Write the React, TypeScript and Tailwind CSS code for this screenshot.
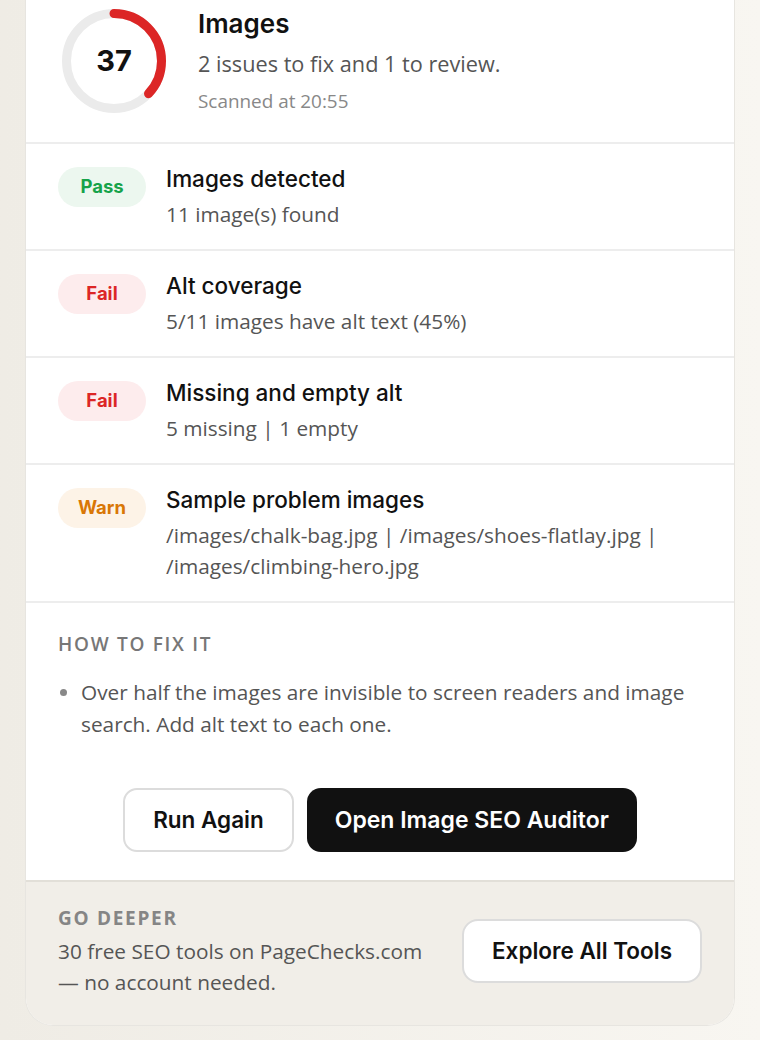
import React from "react";

type Status = "Pass" | "Fail" | "Warn";

const badgeCls: Record<Status, string> = {
  Pass: "bg-[#ecf7ef] text-[#16a34a]",
  Fail: "bg-[#fdeced] text-[#dc2626]",
  Warn: "bg-[#fdf3e7] text-[#d97706]",
};

const rows: { status: Status; title: string; desc: string }[] = [
  { status: "Pass", title: "Images detected", desc: "11 image(s) found" },
  { status: "Fail", title: "Alt coverage", desc: "5/11 images have alt text (45%)" },
  { status: "Fail", title: "Missing and empty alt", desc: "5 missing | 1 empty" },
  {
    status: "Warn",
    title: "Sample problem images",
    desc: "/images/chalk-bag.jpg | /images/shoes-flatlay.jpg | /images/climbing-hero.jpg",
  },
];

const head = "font-['Inter','Liberation_Sans',sans-serif]";
const body = "font-['Open_Sans','Liberation_Sans',sans-serif]";

function Ring({ value }: { value: number }) {
  const r = 47.5;
  const c = 2 * Math.PI * r;
  return (
    <div className="relative w-[104px] h-[104px] shrink-0">
      <svg width="104" height="104" viewBox="0 0 104 104" className="-rotate-90">
        <circle cx="52" cy="52" r={r} fill="none" stroke="#ebebeb" strokeWidth="9" />
        <circle
          cx="52"
          cy="52"
          r={r}
          fill="none"
          stroke="#dc2626"
          strokeWidth="9"
          strokeLinecap="round"
          strokeDasharray={`${(c * value) / 100} ${c}`}
        />
      </svg>
      <div
        className={`absolute inset-0 flex items-center justify-center text-[29px] font-bold text-[#111] ${head}`}
      >
        {value}
      </div>
    </div>
  );
}

export default function App() {
  return (
    <div className="min-h-[1040px] w-full bg-gradient-to-r from-[#efece5] to-[#f8f6f1] px-[25px] pb-[14px]">
      <div className="bg-white border border-t-0 border-[#e7e5e0] rounded-b-[28px] overflow-hidden">
        {/* header */}
        <div className="flex items-start gap-[32px] pl-[36px] pt-[9px] pb-[29px] border-b-2 border-[#ededed]">
          <Ring value={37} />
          <div className="-mt-[1px]">
            <div className={`text-[26px] leading-[32px] font-semibold text-[#111] ${head}`}>Images</div>
            <div className={`mt-[9px] text-[21.7px] leading-[30px] text-[#555] ${body}`}>
              2 issues to fix and 1 to review.
            </div>
            <div className={`mt-[10px] text-[18.9px] leading-[24px] text-[#888] ${body}`}>
              Scanned at 20:55
            </div>
          </div>
        </div>

        {/* rows */}
        {rows.map((r, i) => (
          <div
            key={i}
            className="flex items-start gap-[20px] pl-[32px] pr-[40px] pt-[21px] pb-[19px] border-b-2 border-[#ededed]"
          >
            <div
              className={`mt-[2px] w-[88px] h-[40px] shrink-0 rounded-full flex items-center justify-center text-[18.5px] font-bold ${head} ${badgeCls[r.status]}`}
            >
              {r.status}
            </div>
            <div className="min-w-0">
              <div className={`text-[22.5px] leading-[28px] font-medium text-[#111] ${head}`}>{r.title}</div>
              <div className={`mt-[6px] text-[20.8px] leading-[31px] text-[#555] ${body}`}>{r.desc}</div>
            </div>
          </div>
        ))}

        {/* how to fix */}
        <div className="px-[32px] pt-[29px] pb-[28px]">
          <div className={`text-[19px] leading-[24px] font-semibold tracking-[0.09em] text-[#777] uppercase ${body}`}>
            How to fix it
          </div>
          <ul className="mt-[20px] pr-[8px]">
            <li className={`flex items-start gap-[14px] text-[20.8px] leading-[32px] text-[#555] ${body}`}>
              <span className="mt-[13px] w-[7px] h-[7px] ml-[2px] rounded-full bg-[#888] shrink-0" />
              <span>
                Over half the images are invisible to screen readers and image search. Add alt text to each one.
              </span>
            </li>
          </ul>
          <div className="mt-[48px] flex justify-center gap-[13px]">
            <button
              className={`h-[64px] px-[28px] rounded-[14px] border-2 border-[#dcdcdc] bg-white text-[22.5px] font-semibold text-[#111] ${head}`}
            >
              Run Again
            </button>
            <button
              className={`h-[64px] px-[28px] rounded-[14px] bg-[#111] text-[23px] font-semibold text-white ${head}`}
            >
              Open Image SEO Auditor
            </button>
          </div>
        </div>

        {/* footer */}
        <div className="bg-[#f1eee8] border-t-2 border-[#e2dfd8] flex items-center justify-between pl-[32px] pr-[32px] pt-[24px] pb-[27px]">
          <div>
            <div
              className={`text-[19px] leading-[24px] font-bold tracking-[0.09em] text-[#858585] uppercase ${body}`}
            >
              Go deeper
            </div>
            <div className={`mt-[6px] w-[385px] text-[20.8px] leading-[31px] text-[#555] ${body}`}>
              30 free SEO tools on PageChecks.com — no account needed.
            </div>
          </div>
          <button
            className={`-mt-[3px] h-[64px] px-[28px] rounded-[16px] border-2 border-[#dcdcdc] bg-white text-[22.5px] font-semibold text-[#111] ${head}`}
          >
            Explore All Tools
          </button>
        </div>
      </div>
    </div>
  );
}
